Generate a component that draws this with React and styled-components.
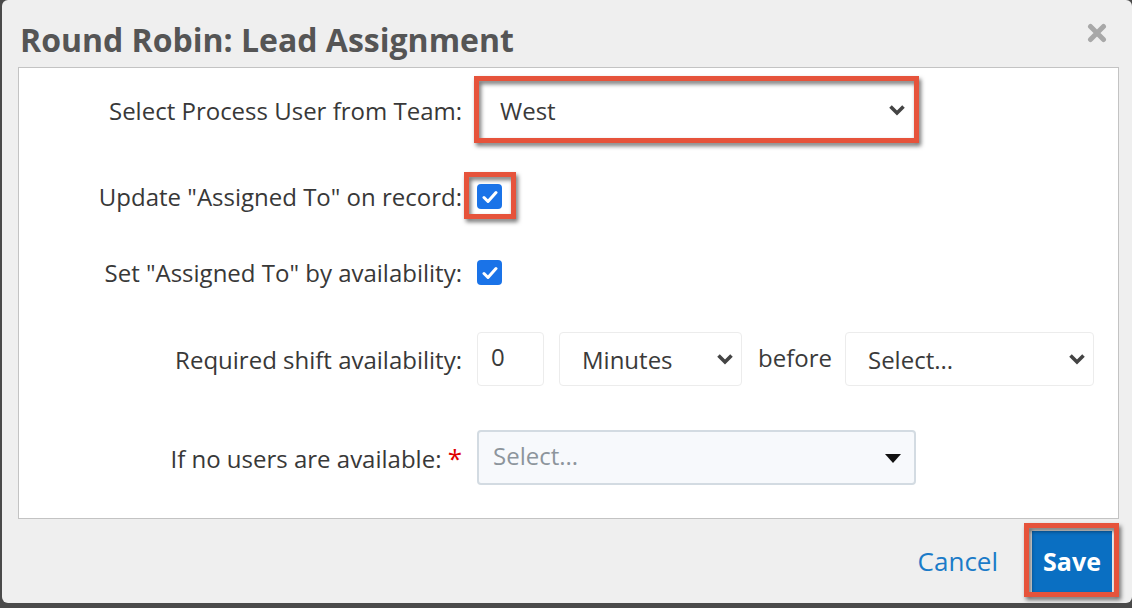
import React from "react";
import styled, { createGlobalStyle } from "styled-components";

const GlobalStyle = createGlobalStyle`
  body {
    margin: 0;
    background: #4a4a4a;
    font-family: "Open Sans", "Liberation Sans", sans-serif;
  }
`;

const Chevron = () => (
  <svg width="18" height="12" viewBox="0 0 18 12">
    <path d="M2.5 2.5 L9 9 L15.5 2.5" fill="none" stroke="#444" strokeWidth="3.6" />
  </svg>
);

const Caret = () => (
  <svg width="16" height="9" viewBox="0 0 16 9">
    <path d="M0 0 H16 L8 9 Z" fill="#111" />
  </svg>
);

const Check = () => (
  <svg width="16" height="14" viewBox="0 0 16 14">
    <path d="M2 7.5 L6 11.5 L14 2.5" fill="none" stroke="#fff" strokeWidth="3" strokeLinecap="round" strokeLinejoin="round" />
  </svg>
);

const CloseIcon = () => (
  <svg width="20" height="20" viewBox="0 0 20 20">
    <path d="M3.5 3.5 L16.5 16.5 M16.5 3.5 L3.5 16.5" stroke="#a8a8a8" strokeWidth="5" strokeLinecap="round" />
  </svg>
);

const App = () => {
  return (
    <>
      <GlobalStyle />
      <StModal>
        <StHeader>
          <StTitle>Round Robin: Lead Assignment</StTitle>
          <StClose>
            <CloseIcon />
          </StClose>
        </StHeader>
        <StPanel>
          <StRow mgtop="15px" height="54px">
            <StLabel>Select Process User from Team:</StLabel>
            <StControls>
              <StMarked>
                <StSelect width="437px">
                  <span>West</span>
                  <Chevron />
                </StSelect>
                <StMark />
              </StMarked>
            </StControls>
          </StRow>
          <StRow mgtop="43px" height="26px">
            <StLabel>Update "Assigned To" on record:</StLabel>
            <StControls>
              <StMarked>
                <StCheckbox>
                  <Check />
                </StCheckbox>
                <StMark tight />
              </StMarked>
            </StControls>
          </StRow>
          <StRow mgtop="50px" height="26px">
            <StLabel>Set "Assigned To" by availability:</StLabel>
            <StControls>
              <StCheckbox>
                <Check />
              </StCheckbox>
            </StControls>
          </StRow>
          <StRow mgtop="50px" height="54px">
            <StLabel>Required shift availability:</StLabel>
            <StControls>
              <StNumber>0</StNumber>
              <StSelect width="183px" faint>
                <span>Minutes</span>
                <Chevron />
              </StSelect>
              <StText>before</StText>
              <StSelect width="249px" faint>
                <span>Select...</span>
                <Chevron />
              </StSelect>
            </StControls>
          </StRow>
          <StRow mgtop="44px" height="54px">
            <StLabel>
              If no users are available: <StRequired>*</StRequired>
            </StLabel>
            <StControls>
              <StPickList>
                <span>Select...</span>
                <Caret />
              </StPickList>
            </StControls>
          </StRow>
        </StPanel>
        <StFooter>
          <StCancel>Cancel</StCancel>
          <StMarked>
            <StSave>Save</StSave>
            <StMark save />
          </StMarked>
        </StFooter>
      </StModal>
    </>
  );
};

export default App;

const StModal = styled.div`
  margin-left: 2px;
  width: 1130px;
  height: 603px;
  background: #efefef;
  border-radius: 6px;
  display: flex;
  flex-direction: column;
  overflow: hidden;
`;

const StHeader = styled.div`
  height: 67px;
  display: flex;
  align-items: center;
  justify-content: space-between;
  padding: 11px 25px 0 18px;
  box-sizing: border-box;
`;

const StTitle = styled.h1`
  margin: 0;
  font-size: 32px;
  font-weight: 700;
  color: #555;
  letter-spacing: 0;
`;

const StClose = styled.span`
  display: flex;
  margin-top: -13px;
`;

const StPanel = styled.div`
  margin: 0 13px 0 16px;
  height: 452px;
  box-sizing: border-box;
  background: #fff;
  border: 1px solid #c3c3c3;
`;

const StRow = styled.div`
  display: grid;
  grid-template-columns: 443px 1fr;
  column-gap: 15px;
  align-items: center;
  margin-top: ${({ mgtop }) => mgtop};
  height: ${({ height }) => height};
`;

const StLabel = styled.div`
  text-align: right;
  font-size: 24px;
  color: #383838;
  white-space: nowrap;
`;

const StRequired = styled.span`
  color: #e00000;
  font-size: 26px;
`;

const StControls = styled.div`
  display: flex;
  align-items: center;
  height: 100%;
  gap: 15px;
`;

const StMarked = styled.div`
  position: relative;
  display: flex;
  align-items: center;
`;

const StMark = styled.div`
  position: absolute;
  pointer-events: none;
  border: 5px solid #e6533b;
  filter: drop-shadow(2px 3px 2px rgba(0, 0, 0, 0.55));
  ${({ tight, save }) =>
    tight
      ? "left: -13px; right: -14px; top: -12px; bottom: -10px;"
      : save
      ? "left: -8px; right: -7px; top: -8px; bottom: -5px;"
      : "left: -3px; right: -5px; top: -7px; bottom: -6px;"}
`;

const StSelect = styled.div`
  width: ${({ width }) => width};
  height: 54px;
  box-sizing: border-box;
  display: flex;
  align-items: center;
  justify-content: space-between;
  padding: 0 7px 0 22px;
  font-size: 24px;
  color: #3a3a3a;
  background: #fff;
  border-radius: 4px;
  border: 1px solid ${({ faint }) => (faint ? "#ececec" : "transparent")};
`;

const StNumber = styled.div`
  width: 67px;
  height: 54px;
  box-sizing: border-box;
  display: flex;
  align-items: center;
  padding: 0 0 6px 13px;
  font-size: 24px;
  color: #3a3a3a;
  border-radius: 4px;
  border: 1px solid #ececec;
`;

const StText = styled.span`
  font-size: 24px;
  color: #3a3a3a;
  margin: -4px -2px 0 1px;
`;

const StCheckbox = styled.div`
  width: 25px;
  height: 25px;
  border-radius: 4px;
  background: #1a73e8;
  display: flex;
  align-items: center;
  justify-content: center;
`;

const StPickList = styled.div`
  width: 439px;
  height: 55px;
  box-sizing: border-box;
  display: flex;
  align-items: center;
  justify-content: space-between;
  padding: 0 13px 4px 14px;
  font-size: 24px;
  color: #8d959c;
  background: #f7f9fc;
  border: 2px solid #d3dbe2;
  border-radius: 4px;
  & svg {
    margin-top: 6px;
  }
`;

const StFooter = styled.div`
  flex: 1;
  display: flex;
  align-items: center;
  justify-content: flex-end;
  gap: 34px;
  padding: 0 20px 0 0;
`;

const StCancel = styled.span`
  font-size: 26px;
  color: #1b7bc8;
`;

const StSave = styled.div`
  height: 61px;
  width: 80px;
  display: flex;
  align-items: center;
  justify-content: center;
  background: #0a6fc2;
  color: #fff;
  font-size: 25px;
  font-weight: 700;
`;
